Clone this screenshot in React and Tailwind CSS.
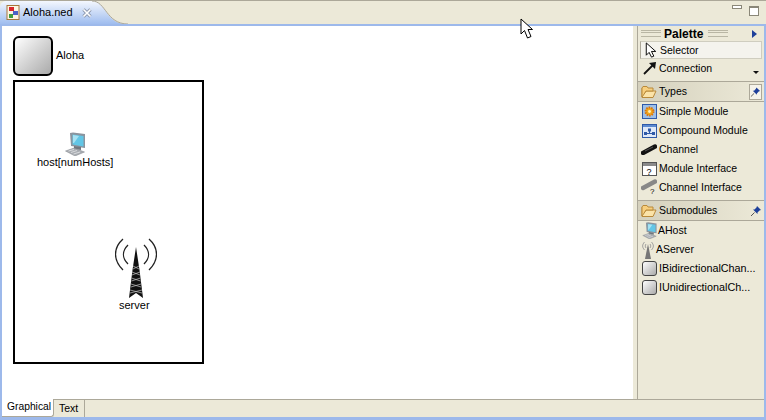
import React from 'react';

const Folder = () => (
  <svg width="16" height="14" viewBox="0 0 16 14" className="shrink-0">
    <path d="M1 3 L1 12.5 L12 12.5 L15 6 L5 6 L3 9" fill="#fbe3a8" stroke="#b98a3a" />
    <path d="M1 3 L2 1.5 L6 1.5 L7 3 L12 3 L12 6 L5 6 L2.5 10 L1 12 Z" fill="#f7cf7e" stroke="#b98a3a" />
  </svg>
);

const Pin = () => (
  <svg width="12" height="12" viewBox="0 0 12 12">
    <path d="M7 1 L11 5 L9.5 5.5 L7.5 7.5 L7.5 9 L3 4.5 L4.5 4.5 L6.5 2.5 Z" fill="#1d3f9a" />
    <path d="M4.5 7.5 L1 11" stroke="#555" />
  </svg>
);

const HostIcon = ({ w = 20, h = 24 }) => (
  <svg width={w} height={h} viewBox="0 0 20 24" className="shrink-0">
    <path d="M5 1 L8 0.5 L20 2 L20 16 L6 14 Z" fill="#8b949e" />
    <path d="M7.5 2.5 L18.5 4 L18.5 14.5 L7.5 12.5 Z" fill="#62c6e6" />
    <path d="M8 3 L14 4 L9 11 L8 11 Z" fill="#a8e2f2" />
    <path d="M9 14 L16 15 L16 18 L9 17 Z" fill="#70777f" />
    <path d="M0.5 19 L9 16 L19.5 20 L10 24 Z" fill="#a9adb2" stroke="#7e8388" strokeWidth="0.5" />
    <path d="M3.5 19 L9 17.5 M6 20.5 L12 18.5 M8.5 22 L15 20" stroke="#e3e5e7" strokeWidth="0.8" />
  </svg>
);

const TowerIcon = () => (
  <svg width="42" height="60" viewBox="0 0 42 60">
    <g fill="none" stroke="#222" strokeWidth="1.3">
      <path d="M8 1 C-2 10 -2 22 8 32" />
      <path d="M34 1 C44 10 44 22 34 32" />
      <path d="M13 7 C7 13 7 20 13 26" />
      <path d="M29 7 C35 13 35 20 29 26" />
    </g>
    <path d="M21 9 L24.5 32 L28 60 L21 55 L14 60 L17.5 32 Z" fill="#111" />
    <g stroke="#c4c4c4" strokeWidth="0.7">
      <path d="M18 28 L24 31 M24 28 L18 31 M17 34 L25 37 M25 34 L17 37 M16.5 40 L25.5 43 M25.5 40 L16.5 43 M16 46 L26 49 M26 46 L16 49 M15 52 L27 55 M27 52 L15 55" />
    </g>
  </svg>
);

const SmallTower = () => (
  <svg width="12" height="18" viewBox="0 0 12 18" className="shrink-0">
    <g fill="none" stroke="#999" strokeWidth="0.9">
      <path d="M2.5 1 C0 4 0 6 2.5 9" />
      <path d="M9.5 1 C12 4 12 6 9.5 9" />
      <path d="M4 3 C3 4.5 3 5.5 4 7" />
      <path d="M8 3 C9 4.5 9 5.5 8 7" />
    </g>
    <path d="M6 3 L9 18 L3 18 Z" fill="#777" />
  </svg>
);

const GreyBox = ({ className }) => (
  <div className={`rounded-[3px] border border-[#444] bg-gradient-to-br from-white to-[#aaa] ${className}`} />
);

const Row = ({ icon, label, pad = 'gap-[2px]', box = 'w-[16px]', text = 'text-[10.5px]' }) => (
  <div className={`flex h-[19px] items-center pl-[3px] ${pad}`}>
    <div className={`flex shrink-0 items-center justify-center ${box}`}>{icon}</div>
    <span className={text}>{label}</span>
  </div>
);

const Drawer = ({ label, pinBox }) => (
  <div className="flex h-[20px] items-center gap-[2px] border-t border-[#aca899] bg-gradient-to-r from-[#d5d1bd] to-[#ece9d8] pl-[3px] pr-[2px]">
    <Folder />
    <span className="flex-1 text-[10.5px]">{label}</span>
    <div className={`flex h-[16px] w-[13px] items-center justify-center ${pinBox ? 'border border-[#aca899] bg-[#f5f3ea]' : ''}`}>
      <Pin />
    </div>
  </div>
);

const Grip = () => (
  <div className="h-[7px] w-[20px] shrink-0 border-y border-[#b9b6a4] bg-[#ece9d8]">
    <div className="mt-[1px] h-[1px] bg-[#b9b6a4]" />
  </div>
);

export default function App() {
  return (
    <div
      className="relative flex h-[420px] w-[766px] flex-col overflow-hidden bg-[#ece9d8] text-[11px] leading-none text-black"
      style={{ fontFamily: '"Liberation Sans", Arial, sans-serif' }}
    >
      {/* onglets du haut */}
      <div className="flex h-[24px] shrink-0 border-t border-[#aca899]">
        <div className="flex w-[92px] items-center rounded-tl-[6px] bg-gradient-to-b from-[#f4f7fd] to-[#9fbdef] pl-[6px]">
          <svg width="15" height="15" viewBox="0 0 15 15" className="shrink-0">
            <rect x="1" y="0.5" width="12" height="14" fill="#fdf6e3" stroke="#a5763a" />
            <rect x="3" y="2" width="5" height="4" fill="#d8262c" />
            <rect x="7" y="6" width="5" height="4" fill="#4a63c8" />
            <rect x="3" y="9" width="4" height="4" fill="#3f9e3f" />
          </svg>
          <span className="ml-[2px]">Aloha.ned</span>
          <svg width="10" height="10" viewBox="0 0 10 10" className="ml-[9px] shrink-0">
            <path d="M1.5 1.5 L8.5 8.5 M8.5 1.5 L1.5 8.5" stroke="#8d99ae" strokeWidth="3.2" />
            <path d="M1.5 1.5 L8.5 8.5 M8.5 1.5 L1.5 8.5" stroke="#fff" strokeWidth="1.6" />
          </svg>
        </div>
        <svg width="36" height="23" viewBox="0 0 36 23" className="shrink-0">
          <defs>
            <linearGradient id="tabFade" x1="0" y1="0" x2="0" y2="1">
              <stop offset="0" stopColor="#f4f7fd" />
              <stop offset="1" stopColor="#9fbdef" />
            </linearGradient>
          </defs>
          <path d="M0 0 C14 0 14 23 34 23 L0 23 Z" fill="url(#tabFade)" />
          <path d="M0 0 C14 0 14 23 36 23" fill="none" stroke="#aca899" />
        </svg>
        <div className="flex flex-1 items-start justify-end gap-[7px] pr-[7px] pt-[4px]">
          <div className="h-[4px] w-[10px] border border-[#8a8778] bg-white" />
          <div className="mt-[1px] h-[10px] w-[10px] border border-t-2 border-[#8a8778] bg-white" />
        </div>
      </div>

      {/* cadre bleu */}
      <div className="flex min-h-0 flex-1 flex-col border-x-2 border-b-[3px] border-t-2 border-[#9db9eb]">
        <div className="flex min-h-0 flex-1">
          {/* canvas */}
          <div className="relative flex-1 bg-white">
            <GreyBox className="absolute left-[11px] top-[10px] h-[40px] w-[40px] rounded-[6px] border-2 border-black" />
            <span className="absolute left-[54px] top-[24px]">Aloha</span>
            <div className="absolute left-[11px] top-[54px] h-[284px] w-[191px] border-2 border-black" />
            <div className="absolute left-[63px] top-[106px]">
              <HostIcon />
            </div>
            <span className="absolute left-[35px] top-[131px]">host[numHosts]</span>
            <div className="absolute left-[113px] top-[212px]">
              <TowerIcon />
            </div>
            <span className="absolute left-[117px] top-[274px]">server</span>
          </div>

          <div className="w-[4px] bg-[#ece9d8]" />

          {/* palette */}
          <div className="flex w-[127px] shrink-0 flex-col border-l border-[#aca899] bg-[#ece9d8]">
            <div className="flex h-[15px] items-center gap-[3px] pl-[3px] text-[12px] font-bold">
              <Grip />
              <span className="mr-[2px]">Palette</span>
              <Grip />
              <svg width="5" height="8" viewBox="0 0 5 8" className="ml-[21px] shrink-0">
                <path d="M0 0 L5 4 L0 8 Z" fill="#1d3f9a" />
              </svg>
            </div>
            <div className="mx-[2px] flex h-[18px] items-center gap-[3px] border border-[#cfcdbf] border-l-[#aca899] bg-[#f4f3ed] pl-[4px]">
              <svg width="12" height="17" viewBox="0 0 12 18" className="shrink-0">
                <path d="M1 1 L1 14 L4 11 L6.5 16 L9 15 L6.5 10 L11 10 Z" fill="#fff" stroke="#000" />
              </svg>
              <span className="text-[10.5px]">Selector</span>
            </div>
            <div className="relative flex h-[18px] items-center gap-[2px] pl-[5px]">
              <svg width="14" height="14" viewBox="0 0 14 14" className="shrink-0">
                <path d="M1 13 L10 4" stroke="#111" strokeWidth="1.8" />
                <path d="M6 2 L13 1 L12 8 Z" fill="#111" />
              </svg>
              <span className="text-[10.5px]">Connection</span>
              <svg width="6" height="3" viewBox="0 0 6 3" className="absolute bottom-[3px] right-[5px]">
                <path d="M0 0 L6 0 L3 3 Z" fill="#111" />
              </svg>
            </div>
            <div className="h-[4px]" />
            <Drawer label="Types" pinBox />
            <div className="flex flex-col border-t border-[#aca899]">
              <Row
                label="Simple Module"
                icon={
                  <svg width="15" height="15" viewBox="0 0 15 15">
                    <rect x="0.5" y="0.5" width="14" height="14" fill="#9cc0ea" stroke="#2f5aa8" />
                    <circle cx="7.5" cy="7.5" r="4" fill="#f2a81d" stroke="#d8740f" strokeDasharray="1.5 1" strokeWidth="2" />
                    <circle cx="7.5" cy="7.5" r="1.4" fill="#fff2c4" />
                  </svg>
                }
              />
              <Row
                label="Compound Module"
                icon={
                  <svg width="15" height="14" viewBox="0 0 15 14">
                    <rect x="0.5" y="0.5" width="14" height="13" fill="#dfe9f8" stroke="#2f5aa8" />
                    <rect x="1" y="1" width="13" height="2" fill="#5c8ad0" />
                    <rect x="2" y="8" width="3" height="3" fill="#2f5aa8" />
                    <rect x="10" y="8" width="3" height="3" fill="#2f5aa8" />
                    <rect x="6" y="4.5" width="3" height="3" fill="#2f5aa8" />
                    <path d="M5 9.5 L10 9.5 M7.5 7 L7.5 9.5" stroke="#2f5aa8" fill="none" />
                  </svg>
                }
              />
              <Row
                label="Channel"
                icon={
                  <svg width="16" height="11" viewBox="0 0 16 11">
                    <path d="M2 9 L14 2.5" stroke="#111" strokeWidth="4.4" strokeLinecap="round" />
                    <path d="M4 7 L12 3" stroke="#666" strokeWidth="0.8" />
                  </svg>
                }
              />
              <Row
                label="Module Interface"
                icon={
                  <svg width="15" height="14" viewBox="0 0 15 14">
                    <rect x="0.5" y="0.5" width="14" height="13" fill="#fff" stroke="#555" />
                    <rect x="1" y="1" width="13" height="3" fill="#8a8a8a" />
                    <text x="4.5" y="12.5" fontSize="9" fill="#000" fontFamily="Liberation Sans">?</text>
                  </svg>
                }
              />
              <Row
                label="Channel Interface"
                icon={
                  <svg width="16" height="17" viewBox="0 0 16 17">
                    <path d="M2 9 L14 2.5" stroke="#888" strokeWidth="4.4" strokeLinecap="round" />
                    <text x="9" y="15" fontSize="8" fill="#000" fontFamily="Liberation Sans">?</text>
                  </svg>
                }
              />
            </div>
            <div className="h-[3px]" />
            <Drawer label="Submodules" />
            <div className="flex flex-col border-t border-[#aca899]">
              <Row label="AHost" pad="gap-[1px]" icon={<HostIcon w={15} h={17} />} />
              <Row label="AServer" pad="gap-[1px]" box="w-[14px]" icon={<SmallTower />} />
              <Row label="IBidirectionalChan..." text="text-[10.8px]" icon={<GreyBox className="h-[15px] w-[15px]" />} />
              <Row label="IUnidirectionalCh..." text="text-[10.8px]" icon={<GreyBox className="h-[15px] w-[15px]" />} />
            </div>
          </div>
        </div>

        {/* onglets du bas */}
        <div className="flex h-[18px] shrink-0 items-stretch border-t border-[#aca899]">
          <div className="mt-[-1px] flex w-[52px] items-center rounded-br-[3px] border-b border-r border-[#aca899] bg-white pl-[5px] text-[10.3px]">
            Graphical
          </div>
          <div className="flex w-[31px] items-center border-r border-[#aca899] pl-[5px] text-[10.5px]">Text</div>
        </div>
      </div>

      {/* curseur de la souris */}
      <svg width="14" height="22" viewBox="0 0 14 22" className="absolute left-[520px] top-[18px]">
        <path d="M1 1 L1 16 L4.5 12.5 L7.5 20 L11 18.5 L8 11.5 L12.5 11.5 Z" fill="#fff" stroke="#000" />
      </svg>
    </div>
  );
}
